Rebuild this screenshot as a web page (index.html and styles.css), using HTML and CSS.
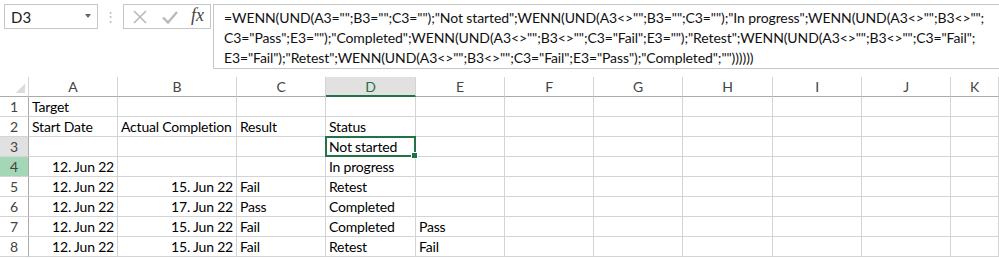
FILE: index.html
```html
<!DOCTYPE html>
<html lang="de">
<head>
  <meta charset="UTF-8" />
  <title>Sheet</title>
  <link rel="stylesheet" href="styles.css">
</head>
<body>

  <div class="formula-bar">
    <div class="name-box">
      <span>D3</span>
      <span class="caret"></span>
    </div>
    <div class="grip">&#8942;</div>
    <div class="fx-box">
      <svg class="icon" width="16" height="16" viewBox="0 0 16 16"><path d="M2 2 L14 14 M14 2 L2 14" stroke="#b9b9b9" stroke-width="1.6" fill="none"/></svg>
      <svg class="icon" width="18" height="16" viewBox="0 0 18 16"><path d="M2 8.5 L7 13.5 L16 3" stroke="#b9b9b9" stroke-width="2.4" fill="none"/></svg>
      <span class="fx">fx</span>
    </div>
    <div class="formula">
      =WENN(UND(A3="";B3="";C3="");"Not started";WENN(UND(A3&lt;&gt;"";B3="";C3="");"In progress";WENN(UND(A3&lt;&gt;"";B3&lt;&gt;"";<br>
      C3="Pass";E3="");"Completed";WENN(UND(A3&lt;&gt;"";B3&lt;&gt;"";C3="Fail";E3="");"Retest";WENN(UND(A3&lt;&gt;"";B3&lt;&gt;"";C3="Fail";<br>
      E3="Fail");"Retest";WENN(UND(A3&lt;&gt;"";B3&lt;&gt;"";C3="Fail";E3="Pass");"Completed";""))))))
    </div>
  </div>

  <div class="sheet">
    <!-- column headers -->
    <div class="hd corner"></div>
    <div class="hd">A</div>
    <div class="hd">B</div>
    <div class="hd">C</div>
    <div class="hd hd-sel">D</div>
    <div class="hd">E</div>
    <div class="hd">F</div>
    <div class="hd">G</div>
    <div class="hd">H</div>
    <div class="hd">I</div>
    <div class="hd">J</div>
    <div class="hd">K</div>

    <!-- row 1 -->
    <div class="rh">1</div>
    <div class="c">Target</div><div class="c"></div><div class="c"></div><div class="c"></div><div class="c"></div><div class="c"></div><div class="c"></div><div class="c"></div><div class="c"></div><div class="c"></div><div class="c"></div>

    <!-- row 2 -->
    <div class="rh">2</div>
    <div class="c">Start Date</div><div class="c">Actual Completion</div><div class="c">Result</div><div class="c">Status</div><div class="c"></div><div class="c"></div><div class="c"></div><div class="c"></div><div class="c"></div><div class="c"></div><div class="c"></div>

    <!-- row 3 -->
    <div class="rh rh-sel">3</div>
    <div class="c"></div><div class="c"></div><div class="c"></div><div class="c active">Not started</div><div class="c"></div><div class="c"></div><div class="c"></div><div class="c"></div><div class="c"></div><div class="c"></div><div class="c"></div>

    <!-- row 4 -->
    <div class="rh rh-green">4</div>
    <div class="c num">12. Jun 22</div><div class="c"></div><div class="c"></div><div class="c">In progress</div><div class="c"></div><div class="c"></div><div class="c"></div><div class="c"></div><div class="c"></div><div class="c"></div><div class="c"></div>

    <!-- row 5 -->
    <div class="rh">5</div>
    <div class="c num">12. Jun 22</div><div class="c num">15. Jun 22</div><div class="c">Fail</div><div class="c">Retest</div><div class="c"></div><div class="c"></div><div class="c"></div><div class="c"></div><div class="c"></div><div class="c"></div><div class="c"></div>

    <!-- row 6 -->
    <div class="rh">6</div>
    <div class="c num">12. Jun 22</div><div class="c num">17. Jun 22</div><div class="c">Pass</div><div class="c">Completed</div><div class="c"></div><div class="c"></div><div class="c"></div><div class="c"></div><div class="c"></div><div class="c"></div><div class="c"></div>

    <!-- row 7 -->
    <div class="rh">7</div>
    <div class="c num">12. Jun 22</div><div class="c num">15. Jun 22</div><div class="c">Fail</div><div class="c">Completed</div><div class="c">Pass</div><div class="c"></div><div class="c"></div><div class="c"></div><div class="c"></div><div class="c"></div><div class="c"></div>

    <!-- row 8 -->
    <div class="rh">8</div>
    <div class="c num">12. Jun 22</div><div class="c num">15. Jun 22</div><div class="c">Fail</div><div class="c">Retest</div><div class="c">Fail</div><div class="c"></div><div class="c"></div><div class="c"></div><div class="c"></div><div class="c"></div><div class="c"></div>
  </div>

</body>
</html>
```

FILE: styles.css
```css
body {
  margin: 0;
  background: #ffffff;
  font-family: 'Lato', 'Liberation Sans', sans-serif;
  color: #000;
  overflow: hidden;
}

.formula-bar {
  display: flex;
  align-items: flex-start;
  padding: 4px 0 0 4px;
  height: 77px;
  box-sizing: border-box;
}

.name-box {
  width: 94px;
  height: 25px;
  box-sizing: border-box;
  border: 1px solid #c6c6c6;
  display: flex;
  align-items: center;
  justify-content: space-between;
  padding: 0 6px 0 6px;
  font-size: 15px;
  color: #222;
}

.caret {
  width: 0;
  height: 0;
  border-left: 3px solid transparent;
  border-right: 3px solid transparent;
  border-top: 4px solid #666;
  margin-top: -2px;
}

.grip {
  width: 25px;
  text-align: center;
  color: #bbb;
  font-size: 13px;
  line-height: 25px;
}

.fx-box {
  width: 88px;
  height: 25px;
  box-sizing: border-box;
  border: 1px solid #c6c6c6;
  display: flex;
  align-items: center;
  justify-content: space-between;
  padding: 0 6px 0 8px;
}

.fx {
  font-family: 'Liberation Serif', serif;
  font-style: italic;
  font-size: 18px;
  color: #444;
  margin-top: -2px;
}

.formula {
  flex: 1;
  height: 65px;
  margin-left: 2px;
  margin-right: -2px;
  box-sizing: border-box;
  border: 1px solid #c6c6c6;
  padding: 3px 0 0 10px;
  font-size: 14px;
  letter-spacing: -0.1px;
  line-height: 20px;
  white-space: nowrap;
  overflow: hidden;
  color: #111;
}

.sheet {
  display: grid;
  grid-template-columns: 29px 89px 119px 89px 90px 89px 89px 89px 90px 89px 89px 1fr;
  grid-auto-rows: 20px;
  font-size: 14px;
  letter-spacing: -0.2px;
}

.hd {
  border-right: 1px solid #d4d4d4;
  border-bottom: 1px solid #ababab;
  color: #444;
  text-align: center;
  line-height: 19px;
  box-sizing: border-box;
}

.hd-sel {
  background: #e1e1e1;
  border-bottom: 2px solid #217346;
  color: #217346;
}

.corner {
  background: linear-gradient(135deg, transparent 62%, #dcdcdc 62%);
  background-size: 12px 12px;
  background-repeat: no-repeat;
  background-position: right 3px bottom 3px;
}

.rh {
  border-right: 1px solid #ababab;
  border-bottom: 1px solid #d4d4d4;
  color: #444;
  text-align: center;
  line-height: 19px;
  box-sizing: border-box;
}

.rh-sel {
  background: #e1e1e1;
}

.rh-green {
  background: #a3d7b6;
}

.c {
  border-right: 1px solid #d4d4d4;
  border-bottom: 1px solid #d4d4d4;
  box-sizing: border-box;
  padding: 0 3px;
  line-height: 19px;
  white-space: nowrap;
  overflow: visible;
}

.num {
  text-align: right;
}

.active {
  position: relative;
}

.active::after {
  content: "";
  position: absolute;
  left: -1px;
  top: -1px;
  right: -1px;
  bottom: -1px;
  border: 2px solid #217346;
}

.active::before {
  content: "";
  position: absolute;
  right: -3px;
  bottom: -3px;
  width: 5px;
  height: 5px;
  background: #217346;
  border: 1px solid #fff;
  z-index: 1;
}
```
